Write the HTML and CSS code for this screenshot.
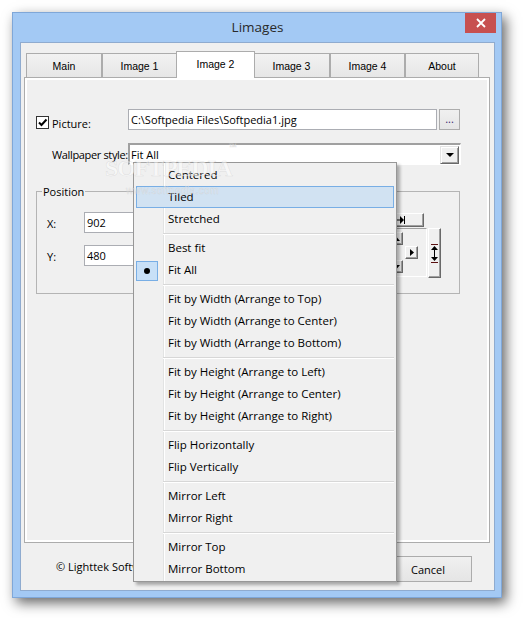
FILE: index.html
```html
<!DOCTYPE html>
<html>
<head>
<meta charset="utf-8">
<title>Limages</title>
<link rel="stylesheet" href="styles.css">
</head>
<body>
<div class="window">
  <div class="titlebar">
    <span></span>
    <span class="title">Limages</span>
    <div class="close"><svg width="10" height="10" viewBox="0 0 10 10"><path d="M1 1L9 9M9 1L1 9" stroke="#fff" stroke-width="1.8" fill="none"/></svg></div>
  </div>
  <div class="client">
    <div class="tabs">
      <div class="tab t-main">Main</div>
      <div class="tab t-img1">Image 1</div>
      <div class="tab active">Image 2</div>
      <div class="tab t-img3">Image 3</div>
      <div class="tab t-img4">Image 4</div>
      <div class="tab t-about">About</div>
    </div>
    <div class="panel">
      <div class="pic-row">
        <div class="check-label">
          <span class="checkbox"><svg width="11" height="11" viewBox="0 0 11 11"><path d="M2 5.5L4.5 8L9.5 2.5" stroke="#000" stroke-width="2" fill="none"/></svg></span>
          <span class="lbl">Picture:</span>
        </div>
        <div class="textbox path">C:\Softpedia Files\Softpedia1.jpg</div>
        <div class="btn dots">...</div>
      </div>
      <div class="style-row">
        <div class="style-label">Wallpaper style:</div>
        <div class="combo"><span class="combo-text">Fit All</span><span class="combo-btn"><i class="tri-down"></i></span></div>
      </div>
      <div class="group">
        <div class="legend">Position</div>
        <div class="group-body">
          <div class="coords">
            <div class="coord"><span class="coord-lbl">X:</span><div class="textbox num">902</div></div>
            <div class="coord"><span class="coord-lbl">Y:</span><div class="textbox num">480</div></div>
          </div>
          <div class="controls">
            <div class="col-a">
              <div class="btn3d wide"><svg width="40" height="8" viewBox="0 0 40 8"><path d="M0.5 0V8M39.5 0V8" stroke="#000"/><path d="M1 4L5 0V8Z M39 4L35 0V8Z" fill="#000"/><path d="M5 4H35" stroke="#000"/></svg></div>
              <div class="pad-frame">
                <div class="pad">
                  <span></span>
                  <div class="btn3d key"><svg width="7" height="4" viewBox="0 0 7 4"><path d="M3.5 0L7 4H0Z" fill="#000"/></svg></div>
                  <span></span>
                  <div class="btn3d key"><svg width="4" height="7" viewBox="0 0 4 7"><path d="M0 3.5L4 0V7Z" fill="#000"/></svg></div>
                  <span></span>
                  <div class="btn3d key"><svg width="4" height="7" viewBox="0 0 4 7"><path d="M4 3.5L0 0V7Z" fill="#000"/></svg></div>
                  <span></span>
                  <div class="btn3d key"><svg width="7" height="4" viewBox="0 0 7 4"><path d="M3.5 4L7 0H0Z" fill="#000"/></svg></div>
                  <span></span>
                </div>
              </div>
            </div>
            <div class="btn3d tall"><svg width="7" height="19" viewBox="0 0 7 19"><path d="M0 0.5H7M0 18.5H7" stroke="#5a0f0f"/><path d="M3.5 2L7 6H0Z M3.5 17L7 13H0Z" fill="#000"/><path d="M3.5 6V13" stroke="#000"/></svg></div>
          </div>
        </div>
      </div>
    </div>
    <div class="footer">
      <div class="copyright">© Lighttek Software</div>
      <div class="btn cancel">Cancel</div>
    </div>
  </div>
</div>

<div class="wm wm-big">SOFTPEDIA</div>
<div class="wm wm-tm">™</div>
<div class="wm wm-url">www.softpedia.com</div>

<div class="menu">
  <div class="item"><span class="ico"></span>Centered</div>
  <div class="item hl"><span class="ico"></span>Tiled</div>
  <div class="item"><span class="ico"></span>Stretched</div>
  <div class="sep"></div>
  <div class="item"><span class="ico"></span>Best fit</div>
  <div class="item"><span class="ico"><span class="chk"><span class="dot"></span></span></span>Fit All</div>
  <div class="sep"></div>
  <div class="item"><span class="ico"></span>Fit by Width (Arrange to Top)</div>
  <div class="item"><span class="ico"></span>Fit by Width (Arrange to Center)</div>
  <div class="item"><span class="ico"></span>Fit by Width (Arrange to Bottom)</div>
  <div class="sep"></div>
  <div class="item"><span class="ico"></span>Fit by Height (Arrange to Left)</div>
  <div class="item"><span class="ico"></span>Fit by Height (Arrange to Center)</div>
  <div class="item"><span class="ico"></span>Fit by Height (Arrange to Right)</div>
  <div class="sep"></div>
  <div class="item"><span class="ico"></span>Flip Horizontally</div>
  <div class="item"><span class="ico"></span>Flip Vertically</div>
  <div class="sep"></div>
  <div class="item"><span class="ico"></span>Mirror Left</div>
  <div class="item"><span class="ico"></span>Mirror Right</div>
  <div class="sep"></div>
  <div class="item"><span class="ico"></span>Mirror Top</div>
  <div class="item"><span class="ico"></span>Mirror Bottom</div>
</div>
</body>
</html>
```

FILE: styles.css
```css
* { box-sizing: border-box; }
html, body { margin: 0; padding: 0; }
body {
  width: 523px;
  height: 618px;
  background: #fff;
  font-family: "Open Sans", "Noto Sans", sans-serif;
  font-size: 11px;
  color: #000;
  position: relative;
  overflow: hidden;
}

.window {
  margin: 12px 0 0 12px;
  width: 490px;
  height: 586px;
  background: #a3c9f4;
  border: 1px solid #7fa7d8;
  box-shadow: 4px 5px 12px rgba(0, 0, 0, 0.6);
  padding: 0 6px 6px 7px;
  display: flex;
  flex-direction: column;
}

.titlebar {
  height: 29px;
  display: grid;
  grid-template-columns: 1fr auto 1fr;
  align-items: start;
}
.title {
  font-size: 13.5px;
  line-height: 27px;
  padding-top: 1px;
  color: #2a2a2a;
}
.close {
  justify-self: end;
  margin-right: -1px;
  width: 31px;
  height: 20px;
  background: #c75050;
  display: flex;
  align-items: center;
  justify-content: center;
}

.client {
  flex: 1;
  background: #f0f0f0;
  border: 1px solid #8fabcf;
  padding: 8px 4px 0 3px;
  display: flex;
  flex-direction: column;
}

.tabs {
  display: flex;
  align-items: flex-end;
  height: 26px;
  padding-left: 2px;
  position: relative;
  z-index: 1;
}
.tab {
  height: 24px;
  border: 1px solid #acacac;
  border-bottom: none;
  background: linear-gradient(#f2f2f2, #e6e6e6);
  text-align: center;
  font-family: "Liberation Sans", Arial, sans-serif;
  font-size: 10.5px;
  line-height: 22px;
  padding-top: 1px;
}
.t-main { width: 76px; }
.t-img1 { width: 75px; }
.t-img3 { width: 77px; }
.t-img4 { width: 75px; }
.t-about { width: 74px; }
.tab.active {
  width: 79px;
  height: 27px;
  margin: 0 -2px -1px -1px;
  background: #fff;
  position: relative;
  z-index: 2;
}

.panel {
  height: 466px;
  border: 1px solid #acacac;
  box-shadow: inset 0 0 0 2px #fff;
  padding: 0 0 0 11px;
}

.pic-row {
  display: flex;
  margin-top: 31px;
  height: 21px;
}
.check-label {
  width: 92px;
  height: 13px;
  margin-top: 7px;
  display: flex;
  align-items: center;
}
.checkbox {
  width: 13px;
  height: 13px;
  border: 1px solid #333;
  background: #fff;
  display: flex;
  flex: none;
}
.lbl {
  margin-left: 3px;
  line-height: 15px;
  padding-top: 1px;
}
.textbox {
  background: #fff;
  border: 1px solid #abadb3;
  height: 21px;
  padding: 0 2px;
  line-height: 19px;
  white-space: nowrap;
  overflow: hidden;
}
.path { width: 309px; }

.btn {
  border: 1px solid #acacac;
  background: linear-gradient(#f0f0f0, #e5e5e5);
  display: flex;
  align-items: center;
  justify-content: center;
}
.dots {
  margin-left: 2px;
  width: 21px;
  height: 21px;
  color: #3a2a6a;
  line-height: 1;
  padding-bottom: 2px;
}

.style-row {
  display: flex;
  margin-top: 13px;
  height: 22px;
}
.style-label {
  width: 92px;
  padding-left: 16px;
  padding-top: 1px;
  line-height: 22px;
  white-space: nowrap;
  letter-spacing: -0.35px;
}
.combo {
  width: 333px;
  height: 22px;
  background: #fff;
  border-style: solid;
  border-width: 2px 1px 1px 2px;
  border-color: #a0a0a0 #fff #fff #a0a0a0;
  display: flex;
  align-items: center;
}
.combo-text {
  padding-left: 1px;
  line-height: 19px;
}
.combo-btn {
  margin-left: auto;
  margin-right: 1px;
  width: 19px;
  height: 18px;
  background: #f0f0f0;
  border-style: solid;
  border-width: 1px;
  border-color: #e3e3e3 #696969 #696969 #e3e3e3;
  box-shadow: inset 1px 1px #fff, inset -1px -1px #a0a0a0;
  display: flex;
  align-items: center;
  justify-content: center;
}
.tri-down {
  width: 0;
  height: 0;
  border-left: 4px solid transparent;
  border-right: 4px solid transparent;
  border-top: 4px solid #000;
  margin-top: 1px;
}

.group {
  width: 424px;
  height: 103px;
  margin-top: 26px;
  border: 1px solid #b4b4b4;
}
.legend {
  margin: -8px 0 0 5px;
  padding: 0 1px;
  background: #f0f0f0;
  width: max-content;
  line-height: 15px;
}
.group-body {
  display: flex;
  margin-top: 13px;
}
.coords {
  padding-left: 10px;
  display: flex;
  flex-direction: column;
  gap: 12px;
}
.coord {
  display: flex;
  align-items: center;
  height: 21px;
}
.coord-lbl { width: 37px; padding-top: 1px; }
.num { width: 110px; }

.controls {
  margin-left: auto;
  margin-right: 18px;
  margin-top: 1px;
  display: flex;
  align-items: flex-start;
}
.col-a {
  width: 81px;
  display: flex;
  flex-direction: column;
}
.btn3d {
  background: #f0f0f0;
  border: 1px solid;
  border-color: #fff #696969 #696969 #fff;
  box-shadow: inset -1px -1px #a0a0a0;
  display: flex;
  align-items: center;
  justify-content: center;
}
.wide { width: 78px; height: 14px; }
.pad-frame {
  margin-top: 1px;
  height: 49px;
  border: 1px solid;
  border-color: #a0a0a0 #fff #fff #a0a0a0;
  padding: 3px 8px 0 0;
  display: flex;
  justify-content: flex-end;
  align-items: flex-start;
}
.pad {
  display: grid;
  grid-template-columns: 13px 13px 13px;
  grid-template-rows: 13px 13px 13px;
  column-gap: 2px;
  row-gap: 1px;
}
.key { width: 13px; height: 13px; }
.tall {
  margin-left: 1px;
  margin-top: 15px;
  width: 13px;
  height: 50px;
}

.footer {
  display: flex;
  align-items: flex-start;
  margin-top: 13px;
}
.copyright {
  margin-left: 32px;
  margin-top: 3px;
  line-height: 15px;
  white-space: nowrap;
}
.cancel {
  margin-left: auto;
  margin-right: 18px;
  width: 88px;
  height: 26px;
}

.wm {
  position: absolute;
  pointer-events: none;
  color: rgba(255, 255, 255, 0.5);
  -webkit-text-stroke: 0.5px rgba(170, 170, 170, 0.3);
  font-family: "Liberation Serif", serif;
  font-weight: bold;
  white-space: nowrap;
  z-index: 5;
  line-height: 1;
}
.wm-big {
  left: 105px;
  top: 156px;
  font-size: 24px;
  letter-spacing: -1.2px;
}
.wm-tm {
  left: 229px;
  top: 143px;
  font-size: 8px;
}
.wm-url {
  left: 126px;
  top: 186px;
  font-size: 10px;
  font-family: "Liberation Sans", sans-serif;
  font-weight: normal;
  letter-spacing: 0.4px;
}

.menu {
  position: absolute;
  left: 133px;
  top: 162px;
  width: 264px;
  border: 1px solid #979797;
  background-color: #f0f0f0;
  background-image: linear-gradient(to right, transparent 29px, #e2e3e3 29px, #e2e3e3 30px, #fff 30px, #fff 31px, transparent 31px);
  padding: 1px 2px;
  box-shadow: 3px 3px 3px rgba(0, 0, 0, 0.3);
  z-index: 4;
  font-size: 11.5px;
}
.item {
  height: 22px;
  display: flex;
  align-items: center;
  white-space: nowrap;
  padding-bottom: 1px;
}
.ico {
  width: 32px;
  flex: none;
  display: flex;
  align-items: center;
}
.item.hl {
  background: #d1e2f2;
  border: 1px solid #78aee5;
}
.item.hl .ico { width: 31px; }
.chk {
  width: 22px;
  height: 20px;
  margin-top: 2px;
  background: #c8e0f7;
  border: 1px solid #78aee5;
  display: flex;
  align-items: center;
  justify-content: center;
}
.dot {
  width: 6px;
  height: 6px;
  border-radius: 50%;
  background: #000;
}
.sep {
  height: 7px;
  margin-left: 27px;
  background:
    linear-gradient(#d7d7d7, #d7d7d7) 0 3px / 100% 1px no-repeat,
    linear-gradient(#fff, #fff) 0 4px / 100% 1px no-repeat;
}
```
